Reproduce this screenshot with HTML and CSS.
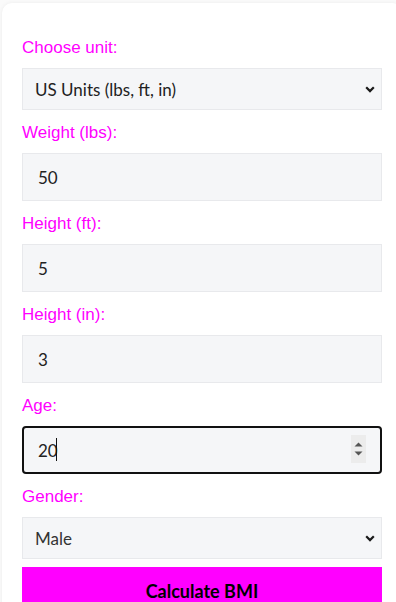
FILE: index.html
```html
<!DOCTYPE html>
<html lang="en">
<head>
    <meta charset="UTF-8">
    <meta name="viewport" content="width=device-width, initial-scale=1.0">
    <title>BMI Calculator</title>
    <link rel="stylesheet" href="styles.css">
</head>
<body>
    <div class="card">
        <form class="bmi-form">
            <label for="unit">Choose unit:</label>
            <div class="select-wrap">
                <select id="unit">
                    <option>US Units (lbs, ft, in)</option>
                    <option>Metric Units (kg, cm)</option>
                </select>
                <svg class="chevron" width="10" height="7" viewBox="0 0 10 7"><path d="M1.2 1.3L5 5.1l3.8-3.8" fill="none" stroke="#1a1a1a" stroke-width="2.2"/></svg>
            </div>

            <label for="weight">Weight (lbs):</label>
            <input id="weight" type="number" value="50">

            <label for="feet">Height (ft):</label>
            <input id="feet" type="number" value="5">

            <label for="inches">Height (in):</label>
            <input id="inches" type="number" value="3">

            <label for="age">Age:</label>
            <div class="input-wrap">
                <input id="age" class="focused" type="number" value="20">
                <span class="caret"></span>
                <span class="spinner">
                    <svg width="15" height="28" viewBox="0 0 15 28"><path d="M3.5 11.5L7.5 7.5 11.5 11.5z" fill="#555"/><path d="M3.5 16.5L7.5 20.5 11.5 16.5z" fill="#555"/></svg>
                </span>
            </div>

            <label for="gender">Gender:</label>
            <div class="select-wrap last">
                <select id="gender">
                    <option>Male</option>
                    <option>Female</option>
                </select>
                <svg class="chevron" width="10" height="7" viewBox="0 0 10 7"><path d="M1.2 1.3L5 5.1l3.8-3.8" fill="none" stroke="#1a1a1a" stroke-width="2.2"/></svg>
            </div>

            <button type="button">Calculate BMI</button>
        </form>
    </div>
</body>
</html>
```

FILE: styles.css
```css
* {
    box-sizing: border-box;
}

body {
    margin: 0;
    background: #fafafa;
    overflow: hidden;
}

.card {
    margin: 3px 0 0 2px;
    width: 400px;
    padding: 35px 20px 20px;
    background: white;
    border-radius: 10px;
    box-shadow: 0 0 4px rgba(0,0,0,0.06);
}

.bmi-form {
    display: flex;
    flex-direction: column;
}

label {
    font-family: 'Liberation Sans', Arial, sans-serif;
    font-size: 17px;
    line-height: 19px;
    color: #f0f;
    margin-bottom: 11px;
}

select,
input {
    font-family: Lato, 'Noto Sans', sans-serif;
    font-size: 17px;
    color: #222;
    width: 100%;
    margin: 0;
    background: #f5f6f8;
    border: 1px solid #e8e9ec;
    border-radius: 0;
    outline: none;
    appearance: none;
    -webkit-appearance: none;
}

select {
    height: 42px;
    padding: 0 30px 0 12px;
}

input {
    height: 48px;
    padding: 0 15px;
    margin-bottom: 13px;
}

input::-webkit-inner-spin-button,
input::-webkit-outer-spin-button {
    -webkit-appearance: none;
    margin: 0;
}

.select-wrap,
.input-wrap {
    position: relative;
    margin-bottom: 13px;
}

.input-wrap input {
    margin-bottom: 0;
}

.select-wrap.last {
    margin-bottom: 8px;
}

#gender {
    color: #333;
}

.chevron {
    position: absolute;
    right: 7px;
    top: 18px;
    pointer-events: none;
}

.focused {
    border: 2px solid #111;
    border-radius: 4px;
    padding: 0 14px;
}

.caret {
    position: absolute;
    left: 34px;
    top: 12px;
    width: 1px;
    height: 23px;
    background: #111;
}

.spinner {
    position: absolute;
    right: 16px;
    top: 9px;
    width: 15px;
    height: 28px;
    background: #ececec;
    display: flex;
}

button {
    font-family: Lato, 'Noto Sans', sans-serif;
    font-size: 18px;
    font-weight: bold;
    color: #000;
    background: #f0f;
    border: none;
    height: 48px;
    padding: 0;
    cursor: pointer;
}
```
